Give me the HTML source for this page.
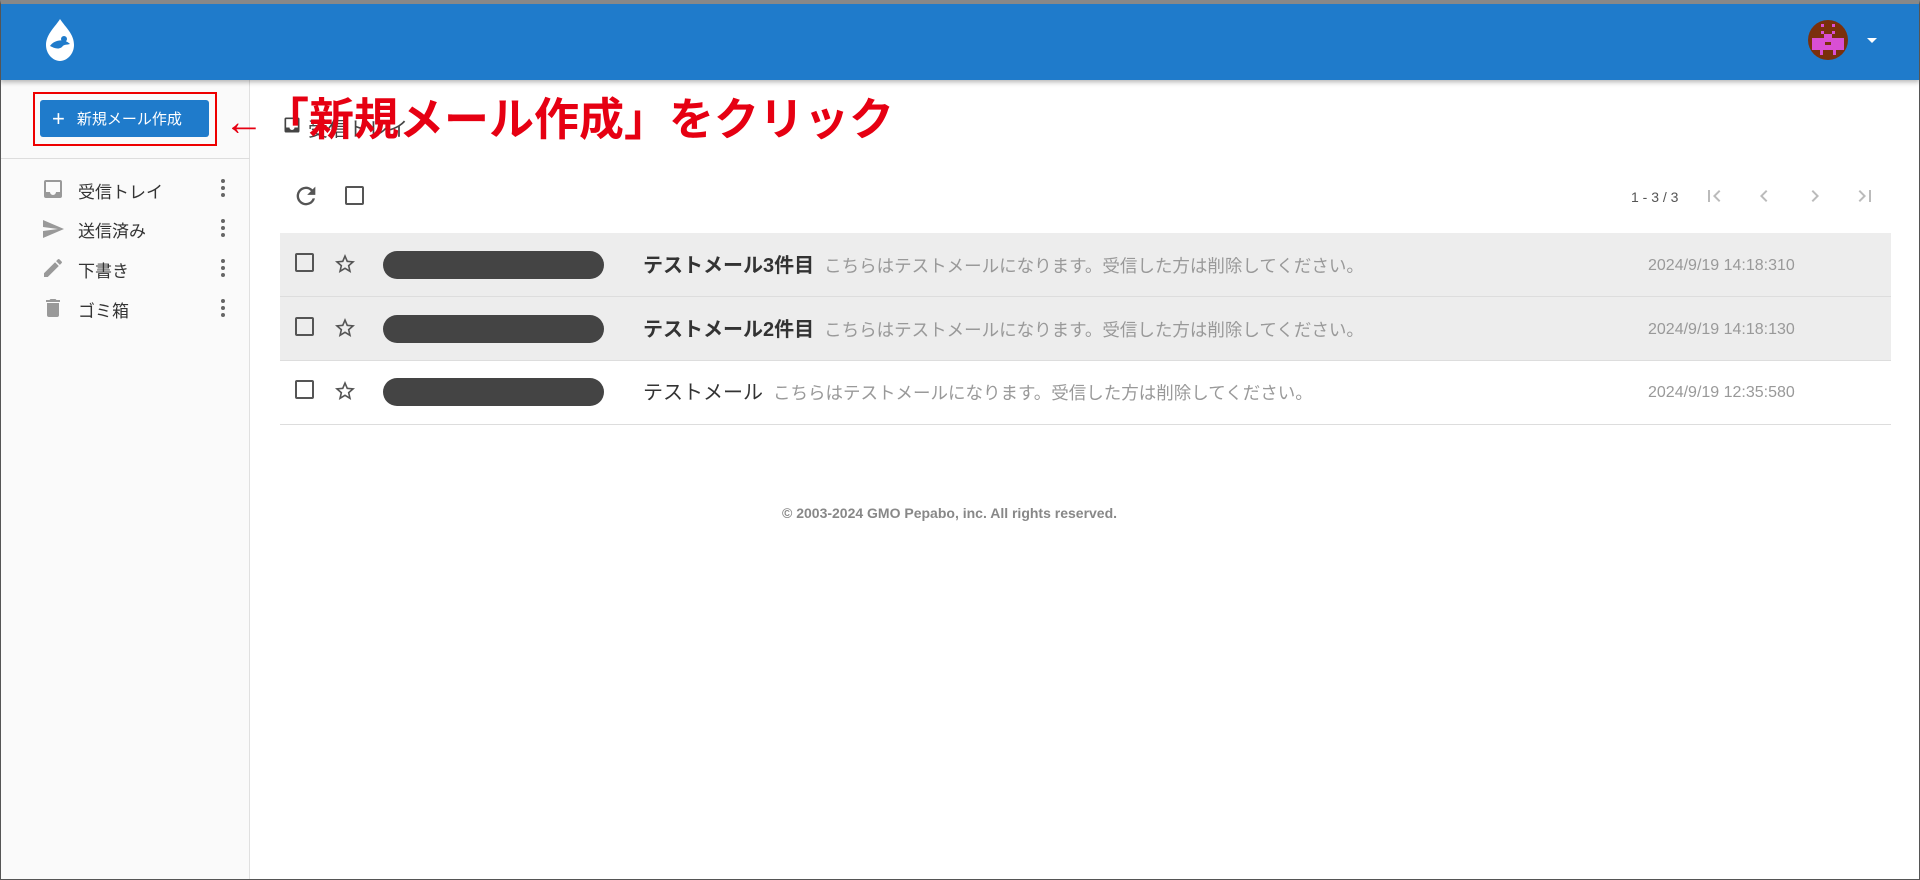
<!DOCTYPE html>
<html><head><meta charset="utf-8"><style>
*{box-sizing:border-box;margin:0;padding:0}
body{width:1920px;height:880px;overflow:hidden;background:#fff;font-family:"Liberation Sans","Noto Sans CJK JP",sans-serif;position:relative}
.frame{position:absolute;left:0;top:0;width:1920px;height:880px;border:1px solid #555;border-top:4px solid #888;z-index:5;pointer-events:none}
.hdr{position:absolute;left:0;top:0;width:1920px;height:80px;background:#1f7bcb;box-shadow:0 2px 5px rgba(0,0,0,.3);z-index:2}
.side{position:absolute;left:0;top:80px;width:250px;height:800px;background:#fafafa;border-right:1px solid #e0e0e0}
.abs{position:absolute}
.btn{left:40px;top:100px;width:169px;height:37px;background:#1f7bcb;border-radius:3px;color:#fff;font-size:15px;line-height:37px;padding-left:12px}
.red{left:33px;top:92px;width:184px;height:54px;border:2px solid #e00}
.nav{left:78px;font-size:17px;color:#333}
.kb{left:221px;width:4px}
.kb i{display:block;width:4px;height:4px;border-radius:2px;background:#666;margin-bottom:3px}
.row{position:absolute;left:280px;width:1611px;height:64px;border-bottom:1px solid #ddd}
.cb{position:absolute;width:19px;height:19px;border:2px solid #555;border-radius:2px}
.blob{position:absolute;left:103px;width:221px;height:28px;border-radius:14px;background:#444}
.subj{position:absolute;left:363px;font-size:20px;color:#333;white-space:nowrap}
.snip{color:#999;font-size:17.5px;font-weight:normal;margin-left:10px}
.date{position:absolute;left:1368px;font-size:16px;color:#999}
</style></head><body>
<div class="frame"></div>
<div class="hdr">
<svg class="abs" style="left:42px;top:18px" width="36" height="44" viewBox="0 0 36 44"><path d="M18 1C14 8 4 16 4 27c0 9 7 16 14 16s14-7 14-16C32 16 24 10 18 1z" fill="#fff"/><path d="M8 28c4-6 14-8 20-2-3 1-6 0-8 3-4 3-8 1-12-1z" fill="#1f7bcb"/><circle cx="22" cy="21" r="3" fill="#1f7bcb"/></svg>
<svg class="abs" style="left:1808px;top:20px" width="40" height="40" viewBox="0 0 40 40"><circle cx="20" cy="20" r="20" fill="#7a300c"/><rect x="13" y="4" width="3" height="3" fill="#d94fd4"/><rect x="24" y="4" width="3" height="3" fill="#d94fd4"/><rect x="13" y="11" width="3" height="3" fill="#d94fd4"/><rect x="24" y="11" width="3" height="3" fill="#d94fd4"/><rect x="16" y="14" width="8" height="4" fill="#d94fd4"/><rect x="4" y="18" width="32" height="12" fill="#d94fd4"/><rect x="17" y="22" width="6" height="3" fill="#7a300c"/><rect x="12" y="30" width="3" height="5" fill="#d94fd4"/><rect x="25" y="30" width="3" height="5" fill="#d94fd4"/></svg>
<div class="abs" style="left:1867px;top:38px;border:5px solid transparent;border-top:5px solid #fff"></div>
</div>
<div class="side"></div>
<div class="abs" style="left:0;top:158px;width:250px;border-top:1px solid #ddd"></div>
<div class="abs btn"><span style="font-size:22px;vertical-align:-2px;margin-right:12px">+</span>新規メール作成</div>
<div class="abs red"></div>
<svg class="abs" style="left:41px;top:177px" width="24" height="24" viewBox="0 0 24 24"><path d="M19 3H5a2 2 0 0 0-2 2v14a2 2 0 0 0 2 2h14a2 2 0 0 0 2-2V5a2 2 0 0 0-2-2zm0 12h-4a3 3 0 0 1-6 0H5V5h14z" fill="#999"/></svg>
<div class="abs nav" style="top:178px">受信トレイ</div>
<svg class="abs" style="left:41px;top:217px" width="24" height="24" viewBox="0 0 24 24"><path d="M2 21l21-9L2 3v7l15 2-15 2z" fill="#999"/></svg>
<div class="abs nav" style="top:217px">送信済み</div>
<svg class="abs" style="left:41px;top:256px" width="24" height="24" viewBox="0 0 24 24"><path d="M3 17.25V21h3.75L17.8 9.94l-3.75-3.75zM20.7 7.04a1 1 0 0 0 0-1.41l-2.34-2.34a1 1 0 0 0-1.41 0l-1.83 1.83 3.75 3.75z" fill="#999"/></svg>
<div class="abs nav" style="top:257px">下書き</div>
<svg class="abs" style="left:41px;top:296px" width="24" height="24" viewBox="0 0 24 24"><path d="M6 19a2 2 0 0 0 2 2h8a2 2 0 0 0 2-2V7H6zM19 4h-3.5l-1-1h-5l-1 1H5v2h14z" fill="#999"/></svg>
<div class="abs nav" style="top:297px">ゴミ箱</div>
<div class="abs kb" style="top:179px"><i></i><i></i><i></i></div>
<div class="abs kb" style="top:219px"><i></i><i></i><i></i></div>
<div class="abs kb" style="top:259px"><i></i><i></i><i></i></div>
<div class="abs kb" style="top:299px"><i></i><i></i><i></i></div>

<svg class="abs" style="left:282px;top:115px" width="20" height="20" viewBox="0 0 24 24"><path d="M19 3H5a2 2 0 0 0-2 2v14a2 2 0 0 0 2 2h14a2 2 0 0 0 2-2V5a2 2 0 0 0-2-2zm0 12h-4a3 3 0 0 1-6 0H5V5h14z" fill="#444"/></svg>
<div class="abs" style="left:308px;top:113px;font-size:20px;color:#444">受信トレイ</div>
<div class="abs" style="left:224px;top:94px;font-size:45px;font-weight:bold;color:#e60012;white-space:nowrap;line-height:52px"><span style="font-weight:normal;font-size:40px">←</span>「新規メール作成」をクリック</div>

<svg class="abs" style="left:292px;top:182px" width="28" height="28" viewBox="0 0 24 24"><path d="M17.65 6.35A8 8 0 1 0 19.73 14h-2.08A6 6 0 1 1 12 6c1.660 0 3.14.69 4.22 1.78L13 11h7V4z" fill="#555"/></svg>
<div class="cb" style="left:345px;top:186px"></div>
<div class="abs" style="left:1631px;top:189px;font-size:14px;color:#555">1 - 3 / 3</div>
<svg class="abs" style="left:1702px;top:184px" width="24" height="24" viewBox="0 0 24 24"><path d="M18.4 16.6L13.8 12l4.6-4.6L17 6l-6 6 6 6zM6 6h2v12H6z" fill="#bbb"/></svg>
<svg class="abs" style="left:1752px;top:184px" width="24" height="24" viewBox="0 0 24 24"><path d="M15.4 7.4L14 6l-6 6 6 6 1.4-1.4L10.8 12z" fill="#bbb"/></svg>
<svg class="abs" style="left:1803px;top:184px" width="24" height="24" viewBox="0 0 24 24"><path d="M10 6L8.6 7.4 13.2 12l-4.6 4.6L10 18l6-6z" fill="#bbb"/></svg>
<svg class="abs" style="left:1853px;top:184px" width="24" height="24" viewBox="0 0 24 24"><path d="M5.6 7.4L10.2 12l-4.6 4.6L7 18l6-6-6-6zM16 6h2v12h-2z" fill="#bbb"/></svg>

<div class="row" style="top:233px;background:#ededed">
<div class="cb" style="left:15px;top:20px"></div>
<svg class="abs" style="left:53px;top:19px" width="24" height="24" viewBox="0 0 24 24"><path d="M22 9.24l-7.19-.62L12 2 9.19 8.63 2 9.24l5.46 4.73L5.82 21 12 17.27 18.18 21l-1.63-7.03zM12 15.4l-3.76 2.27 1-4.28-3.32-2.88 4.38-.38L12 6.1l1.71 4.04 4.38.38-3.32 2.88 1 4.28z" fill="#555"/></svg>
<div class="blob" style="top:18px"></div>
<div class="subj" style="top:16px;font-weight:bold">テストメール3件目<span class="snip">こちらはテストメールになります。受信した方は削除してください。</span></div>
<div class="date" style="top:24px">2024/9/19 14:18:310</div>
</div>
<div class="row" style="top:297px;background:#ededed">
<div class="cb" style="left:15px;top:20px"></div>
<svg class="abs" style="left:53px;top:19px" width="24" height="24" viewBox="0 0 24 24"><path d="M22 9.24l-7.19-.62L12 2 9.19 8.63 2 9.24l5.46 4.73L5.82 21 12 17.27 18.18 21l-1.63-7.03zM12 15.4l-3.76 2.27 1-4.28-3.32-2.88 4.38-.38L12 6.1l1.71 4.04 4.38.38-3.32 2.88 1 4.28z" fill="#555"/></svg>
<div class="blob" style="top:18px"></div>
<div class="subj" style="top:16px;font-weight:bold">テストメール2件目<span class="snip">こちらはテストメールになります。受信した方は削除してください。</span></div>
<div class="date" style="top:24px">2024/9/19 14:18:130</div>
</div>
<div class="row" style="top:361px">
<div class="cb" style="left:15px;top:19px"></div>
<svg class="abs" style="left:53px;top:18px" width="24" height="24" viewBox="0 0 24 24"><path d="M22 9.24l-7.19-.62L12 2 9.19 8.63 2 9.24l5.46 4.73L5.82 21 12 17.27 18.18 21l-1.63-7.03zM12 15.4l-3.76 2.27 1-4.28-3.32-2.88 4.38-.38L12 6.1l1.71 4.04 4.38.38-3.32 2.88 1 4.28z" fill="#555"/></svg>
<div class="blob" style="top:17px"></div>
<div class="subj" style="top:15px">テストメール<span class="snip">こちらはテストメールになります。受信した方は削除してください。</span></div>
<div class="date" style="top:23px">2024/9/19 12:35:580</div>
</div>
<div class="abs" style="left:782px;top:505px;font-size:14px;font-weight:bold;color:#888">© 2003-2024 GMO Pepabo, inc. All rights reserved.</div>
</body></html>
